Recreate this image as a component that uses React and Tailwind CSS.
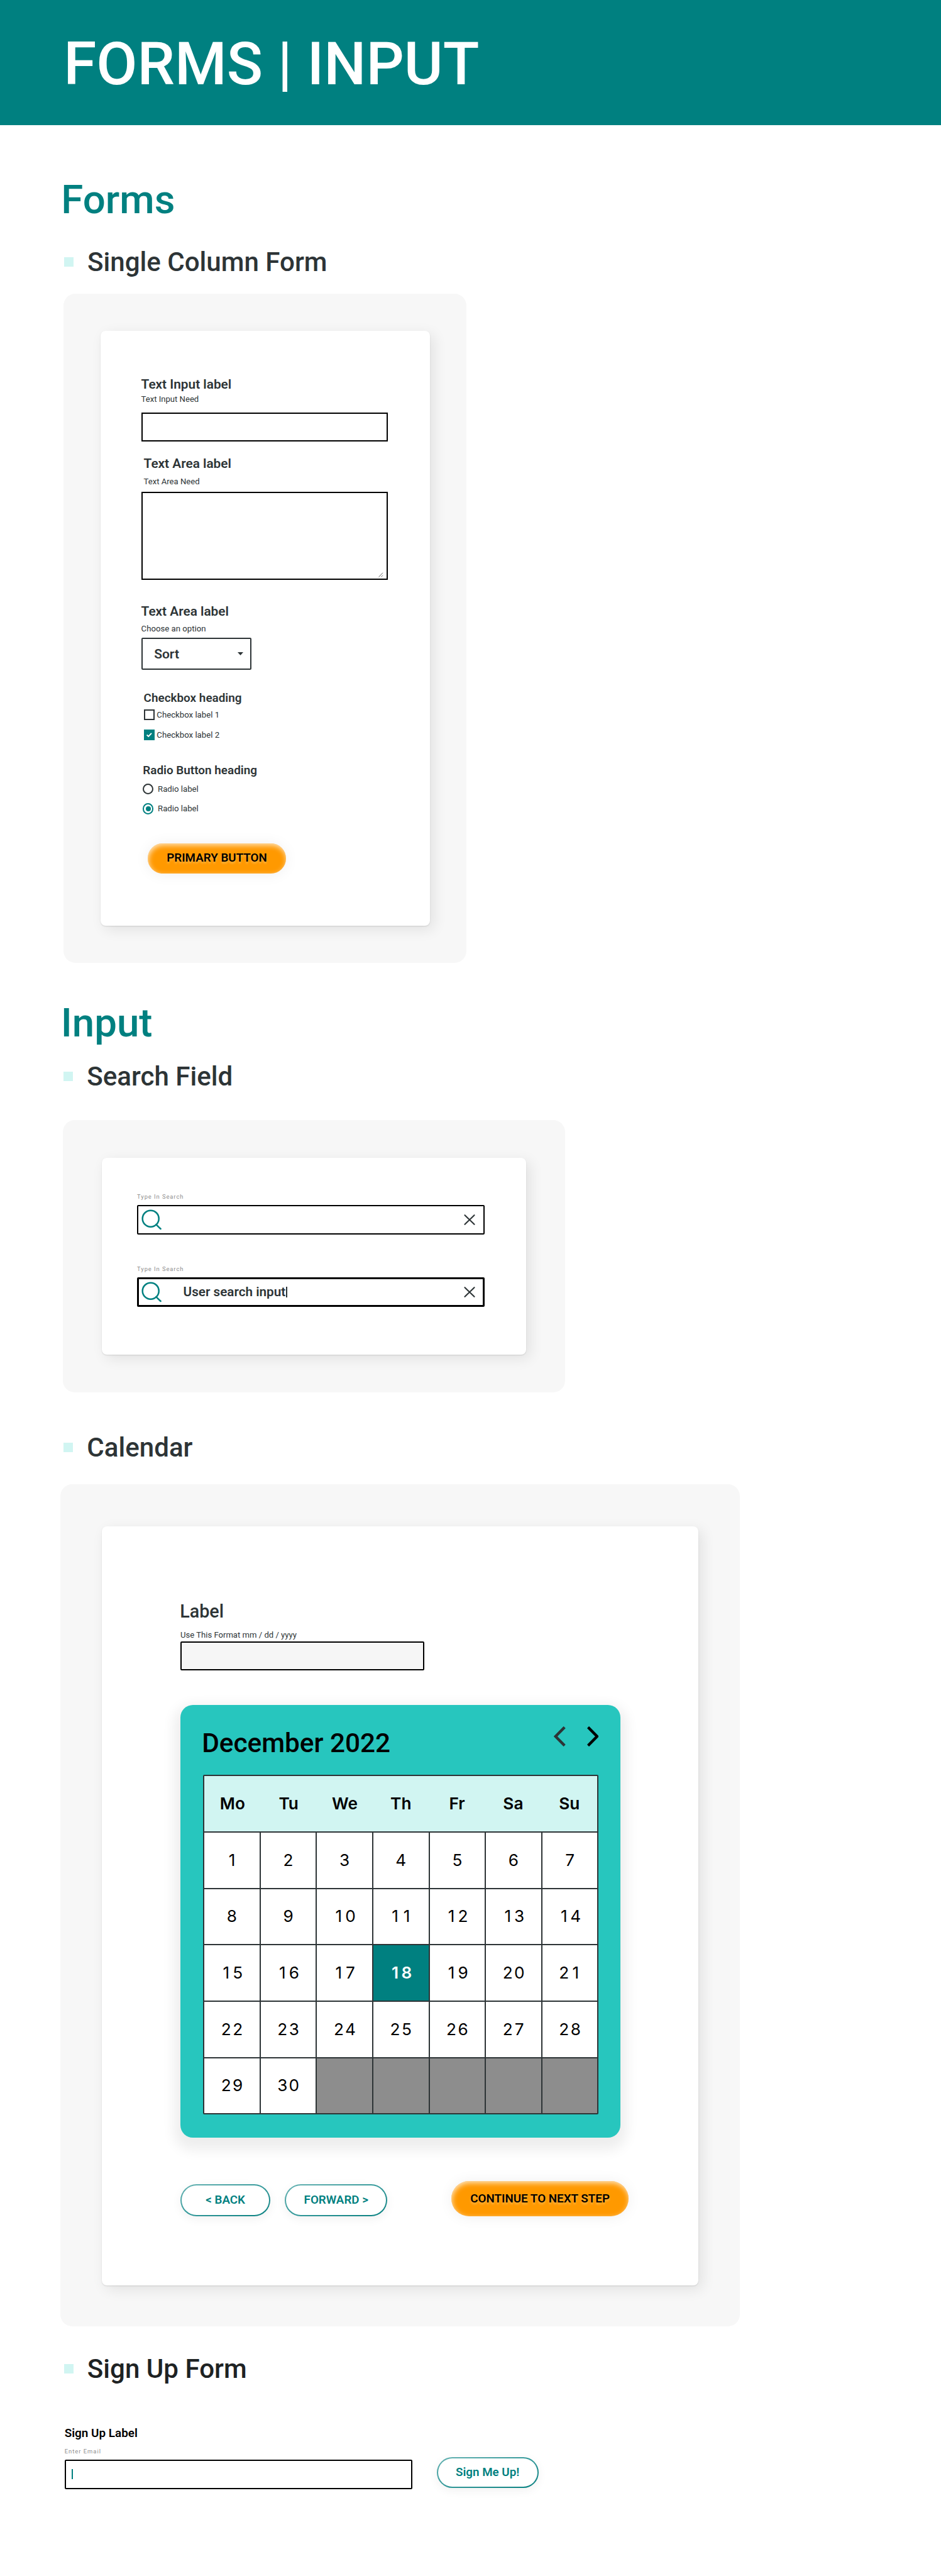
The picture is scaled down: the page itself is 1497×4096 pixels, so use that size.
import React from "react";

const weekdays = ["Mo", "Tu", "We", "Th", "Fr", "Sa", "Su"];
const days = Array.from({ length: 35 }, (_, i) => (i < 30 ? i + 1 : null));

function SubHeading({ children, className }) {
  return (
    <div className={`flex items-start text-[42.1px] leading-none font-medium ${className}`}>
      <span className="mt-[13px] mr-[22px] size-[15px] shrink-0 bg-[#d1f5f2]" />
      <h3>{children}</h3>
    </div>
  );
}

function Panel({ children, className }) {
  return <section className={`rounded-[19px] bg-[#f7f7f7] ${className}`}>{children}</section>;
}

function Card({ children, className }) {
  return (
    <div
      className={`rounded-[8px] bg-white shadow-[6px_6px_22px_rgba(0,0,0,0.09),0_1px_2px_rgba(0,0,0,0.12)] ${className}`}
    >
      {children}
    </div>
  );
}

function PrimaryButton({ children, className }) {
  return (
    <button
      className={`flex shrink-0 items-center justify-center rounded-full bg-[#ff9900] text-[18.8px] leading-none font-semibold text-black shadow-[inset_1px_3px_9px_rgba(255,255,255,0.75),0_1px_24px_-2px_rgba(0,0,0,0.08)] text-shadow-[0_3px_3px_rgba(255,255,255,0.25)] ${className}`}
    >
      {children}
    </button>
  );
}

function OutlineButton({ children, className }) {
  return (
    <button
      className={`shrink-0 rounded-full bg-linear-to-br from-[#66b3b3] via-[#33999a] to-[#008080] p-[2px] shadow-[0_4px_16px_rgba(0,0,0,0.06)] ${className}`}
    >
      <span className="flex size-full items-center justify-center rounded-full bg-white text-[18.8px] leading-none font-semibold text-[#008080]">
        {children}
      </span>
    </button>
  );
}

function SearchField({ value, className }) {
  return (
    <div className={className}>
      <label className="block text-[9.4px] leading-none tracking-[0.94px] text-[#8d8d8d]">Type In Search</label>
      <div
        className={`mt-[8.5px] flex h-[46.8px] w-[552.6px] items-center rounded-[2px] border-black ${
          value ? "border-3 pl-[4px] pr-[11.5px]" : "border-2 pl-[5px] pr-[12.5px]"
        }`}
      >
        <svg className="size-8 shrink-0 overflow-visible" viewBox="0 0 32 32" fill="none" stroke="#008080" strokeWidth="2.5">
          <circle cx="14.7" cy="14.7" r="13" />
          <path d="M23.4 24.2 30.6 31" strokeLinecap="round" />
        </svg>
        {value && (
          <span className="ml-[34.5px] flex items-center text-[20.7px] leading-none font-semibold">
            {value}
            <span className="ml-px h-[17px] w-[1.5px] bg-[#2d3436]" />
          </span>
        )}
        <svg
          className="ml-auto h-[17px] w-[18px] shrink-0"
          viewBox="0 0 18 17"
          fill="none"
          stroke="#2d3436"
          strokeWidth="2.1"
          strokeLinecap="round"
        >
          <path d="M1.5 1.2 16.5 15.8M16.5 1.2 1.5 15.8" />
        </svg>
      </div>
    </div>
  );
}

function SingleColumnForm() {
  return (
    <Panel className="mt-[28.9px] ml-[100.9px] h-[1064.1px] w-[641px] pt-[58.9px] pl-[59.3px]">
      <Card className="flex h-[945.9px] w-[523.9px] flex-col items-start pt-[75.1px] pl-[64.4px]">
        <label className="text-[20.8px] leading-none font-semibold">Text Input label</label>
        <span className="mt-[6.3px] text-[13.1px] leading-none">Text Input Need</span>
        <div className="mt-[14.8px] h-[46.1px] w-[392.6px] border-2 border-black" />

        <label className="mt-[24.7px] ml-[4px] text-[20.8px] leading-none font-semibold">Text Area label</label>
        <span className="mt-[11.7px] ml-[4px] text-[13.1px] leading-none">Text Area Need</span>
        <div className="mt-[9.5px] flex h-[140.4px] w-[392.6px] items-end justify-end border-2 border-black pr-[5px] pb-[2px]">
          <svg className="size-2" viewBox="0 0 8 8" stroke="#666" strokeWidth="1">
            <path d="M0.5 7.5 7 0.7M4.2 7.5 7 4.7" />
          </svg>
        </div>

        <label className="mt-[39.9px] text-[20.8px] leading-none font-semibold">Text Area label</label>
        <span className="mt-[10.2px] text-[13.2px] leading-none">Choose an option</span>
        <div className="mt-[8.2px] flex h-[50.8px] w-[175.7px] items-center justify-between rounded-[2px] border-2 border-[#2d3436] pr-[11px] pl-[18.6px]">
          <span className="pt-[2px] text-[21px] leading-none font-semibold">Sort</span>
          <svg className="h-[5px] w-[9px]" viewBox="0 0 9 5" fill="#2d3436">
            <path d="M0 0h9L4.5 5z" />
          </svg>
        </div>

        <h4 className="mt-[35.6px] ml-[4px] text-[18.9px] leading-none font-semibold">Checkbox heading</h4>
        <div className="mt-[8.5px] ml-[4.4px] flex h-[17px] items-center gap-[3.4px] text-[13.2px] leading-none">
          <span className="size-[17px] border-2 border-[#2d3436]" />
          Checkbox label 1
        </div>
        <div className="mt-[15px] ml-[4.4px] flex h-[17px] items-center gap-[3.4px] text-[13.2px] leading-none">
          <svg className="size-[17px] bg-[#008080]" viewBox="0 0 17 17" fill="none" stroke="#fff" strokeWidth="2">
            <path d="M4.6 8.5 7.2 10.9 12 5.9" />
          </svg>
          Checkbox label 2
        </div>

        <h4 className="mt-[38.8px] ml-[2.7px] text-[18.9px] leading-none font-semibold">Radio Button heading</h4>
        <div className="mt-[10.8px] ml-[2.6px] flex h-[17.2px] items-center gap-[6.7px] text-[13.2px] leading-none">
          <span className="size-[17.2px] rounded-full border-2 border-[#2d3436]" />
          Radio label
        </div>
        <div className="mt-[14.6px] ml-[2.6px] flex h-[17.2px] items-center gap-[6.7px] text-[13.2px] leading-none">
          <span className="flex size-[17.2px] items-center justify-center rounded-full border-2 border-[#008080]">
            <span className="size-[8px] rounded-full bg-[#008080]" />
          </span>
          Radio label
        </div>

        <PrimaryButton className="mt-[46.2px] ml-[10.7px] h-[48.1px] w-[219.5px]">PRIMARY BUTTON</PrimaryButton>
      </Card>
    </Panel>
  );
}

function DayNumber({ value }) {
  return String(value)
    .split("")
    .map((digit, i) => (
      <span key={i} className="w-[18.5px] text-center">
        {digit}
      </span>
    ));
}

function Calendar() {
  return (
    <div className="mt-[55px] h-[688.3px] w-[699.7px] rounded-[20px] bg-[#27c6be] pt-[34.3px] pl-[35.8px] shadow-[0_10px_20px_10px_rgba(0,0,0,0.07)]">
      <div className="flex w-[629.2px] items-start justify-between">
        <h4 className="mt-[6.1px] -ml-[2px] text-[42.3px] leading-none font-medium text-black">December 2022</h4>
        <div className="flex gap-[33.7px]">
          <svg className="h-[32px] w-[18.7px]" viewBox="0 0 18.7 32" fill="none" stroke="#2d3436" strokeWidth="4.4">
            <path d="M17.2 1.4 2.8 16 17.2 30.6" />
          </svg>
          <svg className="h-[32px] w-[18.7px]" viewBox="0 0 18.7 32" fill="none" stroke="#000" strokeWidth="4.4">
            <path d="M1.5 1.4 15.9 16 1.5 30.6" />
          </svg>
        </div>
      </div>
      <div className="mt-[29px] flex h-[540px] w-[629.2px] flex-col gap-[2px] rounded-[2px] border-2 border-[#2d3436] bg-[#2d3436] font-['Inter',sans-serif] text-[26.2px] leading-none text-black">
        <div className="grid h-[87.7px] shrink-0 grid-cols-7 bg-[#d1f5f2] font-semibold">
          {weekdays.map((d) => (
            <span key={d} className="flex items-center justify-center">
              {d}
            </span>
          ))}
        </div>
        <div className="grid flex-1 grid-cols-7 grid-rows-5 gap-[2px]">
          {days.map((d, i) => (
            <span
              key={i}
              className={`flex items-center justify-center ${
                d === 18 ? "bg-[#008080] font-semibold text-white" : d ? "bg-white" : "bg-[#8d8d8d]"
              }`}
            >
              {d && <DayNumber value={d} />}
            </span>
          ))}
        </div>
      </div>
    </div>
  );
}

export default function App() {
  return (
    <main className="h-[4096px] w-full overflow-hidden bg-white font-['Roboto',sans-serif] text-[#2d3436]">
      <header className="h-[199.3px] bg-[#008080] pt-[55px] pl-[101.2px]">
        <h1 className="text-[94.6px] leading-none font-medium text-white">FORMS | INPUT</h1>
      </header>

      <h2 className="mt-[86.8px] ml-[97.3px] text-[63.6px] leading-none font-medium text-[#008080]">Forms</h2>
      <SubHeading className="mt-[46.2px] ml-[102px]">Single Column Form</SubHeading>
      <SingleColumnForm />

      <h2 className="mt-[64px] ml-[96.8px] text-[63.6px] leading-none font-medium text-[#008080]">Input</h2>
      <SubHeading className="mt-[32.1px] ml-[101.3px]">Search Field</SubHeading>
      <Panel className="mt-[47.8px] ml-[100.1px] h-[433.1px] w-[799px] pt-[60.2px] pl-[61.8px]">
        <Card className="h-[313.2px] w-[675.5px] pt-[57.3px] pl-[56.2px]">
          <SearchField />
          <SearchField value="User search input" className="mt-[50.2px]" />
        </Card>
      </Panel>

      <SubHeading className="mt-[67.6px] ml-[101.3px]">Calendar</SubHeading>
      <Panel className="mt-[37px] ml-[96.4px] h-[1338.7px] w-[1080.4px] pt-[66.4px] pl-[65.8px]">
        <Card className="flex h-[1207.2px] w-[949.3px] flex-col items-start pt-[121.7px] pl-[125.2px]">
          <label className="-ml-[1.2px] text-[28.7px] leading-none font-medium">Label</label>
          <span className="mt-[15.7px] -ml-[0.4px] text-[13.1px] leading-none">Use This Format mm / dd / yyyy</span>
          <div className="mt-[3.9px] h-[45.9px] w-[387.4px] rounded-[2px] border-2 border-black bg-[#f6f6f6]" />
          <Calendar />
          <div className="mt-[69.3px] flex items-end">
            <OutlineButton className="h-[51.2px] w-[142.5px]">&lt; BACK</OutlineButton>
            <OutlineButton className="ml-[23.6px] h-[51.2px] w-[162.6px]">FORWARD &gt;</OutlineButton>
            <PrimaryButton className="ml-[101.9px] h-[56.1px] w-[282.3px]">CONTINUE TO NEXT STEP</PrimaryButton>
          </div>
        </Card>
      </Panel>

      <SubHeading className="mt-[47px] ml-[101.8px] text-[#1e2223]">Sign Up Form</SubHeading>
      <div className="mt-[72.1px] ml-[102.7px] flex items-end">
        <div>
          <label className="block text-[18.9px] leading-none font-semibold text-black">Sign Up Label</label>
          <span className="mt-[13.8px] block text-[9.4px] leading-none tracking-[1px] text-[#8d8d8d]">Enter Email</span>
          <div className="mt-[8.5px] flex h-[46.8px] w-[553px] items-center rounded-[2px] border-2 border-black pl-[9px]">
            <span className="h-[16px] w-[2px] bg-[#008080]" />
          </div>
        </div>
        <OutlineButton className="mb-[1.8px] ml-[38.9px] h-[48.7px] w-[162.1px]">Sign Me Up!</OutlineButton>
      </div>
    </main>
  );
}
